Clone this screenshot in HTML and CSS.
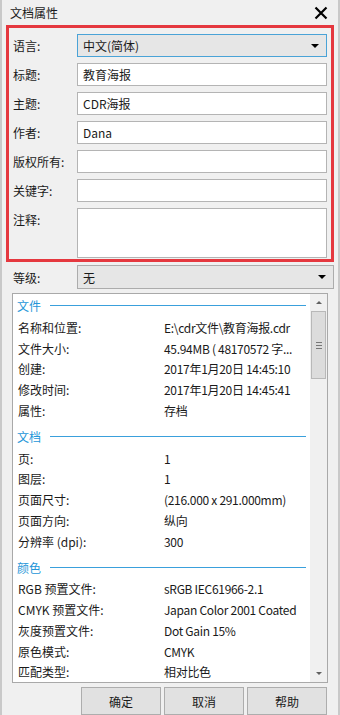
FILE: index.html
```html
<!DOCTYPE html>
<html lang="zh-CN">
<head>
    <meta charset="UTF-8">
    <meta name="viewport" content="width=device-width, initial-scale=1.0">
    <title>文档属性</title>
    <link rel="stylesheet" href="styles.css">
</head>
<body>
    <div class="dialog">
        <div class="title-bar">
            <span class="title">文档属性</span>
            <svg class="close" width="14" height="14" viewBox="0 0 14 14">
                <path d="M1.5 1.5L12.5 12.5M12.5 1.5L1.5 12.5" stroke="#000" stroke-width="2.2" fill="none"/>
            </svg>
        </div>

        <div class="props">
            <div class="field">
                <label>语言:</label>
                <div class="select focused"><span>中文(简体)</span><i class="arrow"></i></div>
            </div>
            <div class="field">
                <label>标题:</label>
                <div class="input">教育海报</div>
            </div>
            <div class="field">
                <label>主题:</label>
                <div class="input">CDR海报</div>
            </div>
            <div class="field">
                <label>作者:</label>
                <div class="input">Dana</div>
            </div>
            <div class="field">
                <label>版权所有:</label>
                <div class="input"></div>
            </div>
            <div class="field">
                <label>关键字:</label>
                <div class="input"></div>
            </div>
            <div class="field field-tall">
                <label>注释:</label>
                <div class="input textarea"></div>
            </div>
        </div>

        <div class="field level-row">
            <label>等级:</label>
            <div class="select"><span>无</span><i class="arrow"></i></div>
        </div>

        <div class="info">
            <div class="info-body">
                <div class="group-head"><span>文件</span><i></i></div>
                <div class="info-row"><span class="key">名称和位置:</span><span class="val">E:\cdr文件\教育海报.cdr</span></div>
                <div class="info-row"><span class="key">文件大小:</span><span class="val">45.94MB ( 48170572 字...</span></div>
                <div class="info-row"><span class="key">创建:</span><span class="val">2017年1月20日 14:45:10</span></div>
                <div class="info-row"><span class="key">修改时间:</span><span class="val">2017年1月20日 14:45:41</span></div>
                <div class="info-row"><span class="key">属性:</span><span class="val">存档</span></div>

                <div class="group-head"><span>文档</span><i></i></div>
                <div class="info-row"><span class="key">页:</span><span class="val">1</span></div>
                <div class="info-row"><span class="key">图层:</span><span class="val">1</span></div>
                <div class="info-row"><span class="key">页面尺寸:</span><span class="val">(216.000 x 291.000mm)</span></div>
                <div class="info-row"><span class="key">页面方向:</span><span class="val">纵向</span></div>
                <div class="info-row"><span class="key">分辨率 (dpi):</span><span class="val">300</span></div>

                <div class="group-head"><span>颜色</span><i></i></div>
                <div class="info-row"><span class="key">RGB 预置文件:</span><span class="val">sRGB IEC61966-2.1</span></div>
                <div class="info-row"><span class="key">CMYK 预置文件:</span><span class="val">Japan Color 2001 Coated</span></div>
                <div class="info-row"><span class="key">灰度预置文件:</span><span class="val">Dot Gain 15%</span></div>
                <div class="info-row"><span class="key">原色模式:</span><span class="val">CMYK</span></div>
                <div class="info-row"><span class="key">匹配类型:</span><span class="val">相对比色</span></div>
            </div>
            <div class="scrollbar">
                <i class="sb-up"></i>
                <div class="sb-track">
                    <div class="sb-thumb"><span class="grip"></span></div>
                </div>
                <i class="sb-down"></i>
            </div>
        </div>

        <div class="buttons">
            <button>确定</button>
            <button>取消</button>
            <button>帮助</button>
        </div>
    </div>
</body>
</html>
```

FILE: styles.css
```css
/* Dialog frame */
body {
    margin: 0;
    background: #f0f0f0;
    font-family: "Noto Sans CJK SC", "Noto Sans", sans-serif;
    font-size: 12px;
    color: #1a1a1a;
    overflow: hidden;
}

.dialog {
    width: 340px;
    height: 715px;
    box-sizing: border-box;
    border-left: 2px solid #c9c9c9;
    border-right: 2px solid #c9c9c9;
    background: #f0f0f0;
    display: flex;
    flex-direction: column;
}

.title-bar {
    height: 25px;
    display: flex;
    align-items: center;
    justify-content: space-between;
    padding: 0 10px 0 8px;
}

.title {
    font-size: 12px;
    line-height: 25px;
}

.close {
    display: block;
}

/* Property fields */
.props {
    margin: 0 4px 0 4px;
    border: 3px solid #e5383f;
    padding: 6px 4px 1px 4px;
    display: flex;
    flex-direction: column;
    gap: 6px;
}

.field {
    display: flex;
    align-items: center;
}

.field label {
    width: 64px;
    flex-shrink: 0;
    line-height: 23px;
}

.field-tall {
    align-items: flex-start;
}

.input,
.select {
    flex: 1;
    height: 23px;
    box-sizing: border-box;
    border: 1px solid #b4b4b4;
    background: #fff;
    padding: 0 5px;
    line-height: 21px;
    white-space: nowrap;
}

.textarea {
    height: 50px;
}

.select {
    display: flex;
    align-items: center;
    justify-content: space-between;
    background: #e6e6e6;
    border-color: #acacac;
    padding-right: 7px;
}

.select.focused {
    border-color: #4aa3d7;
}

.arrow {
    width: 0;
    height: 0;
    border-left: 4px solid transparent;
    border-right: 4px solid transparent;
    border-top: 4px solid #000;
}

.level-row {
    margin: 3px 4px 0 11px;
}

.level-row .select {
    height: 24px;
}

/* Info panel */
.info {
    margin: 4px 10px 0 10px;
    height: 394px;
    box-sizing: border-box;
    border: 1px solid #a9a9a9;
    background: #fff;
    display: flex;
}

.info-body {
    flex: 1;
    overflow: hidden;
}

.group-head {
    height: 23px;
    display: flex;
    align-items: center;
    padding-left: 4px;
    color: #2596d8;
    margin-top: 4px;
}

.group-head:first-child {
    margin-top: 0;
}

.group-head i {
    flex: 1;
    height: 1px;
    background: #3aa0dc;
    margin: 0 4px 0 9px;
}

.info-row {
    height: 20.75px;
    display: flex;
    align-items: center;
    white-space: nowrap;
}

.key {
    width: 151px;
    padding-left: 5px;
    box-sizing: border-box;
    flex-shrink: 0;
}

.val {
    letter-spacing: -0.3px;
}

/* Scrollbar */
.scrollbar {
    width: 17px;
    background: #f0f0f0;
    display: flex;
    flex-direction: column;
    align-items: center;
}

.sb-up,
.sb-down {
    width: 0;
    height: 0;
    border-left: 3px solid transparent;
    border-right: 3px solid transparent;
    margin: 7px 0;
}

.sb-up {
    border-bottom: 3px solid #606060;
}

.sb-down {
    border-top: 3px solid #606060;
}

.sb-track {
    flex: 1;
    width: 100%;
}

.sb-thumb {
    margin: 0 1px;
    height: 68px;
    box-sizing: border-box;
    border: 1px solid #b8b8b8;
    background: #dcdcdc;
    display: flex;
    align-items: center;
    justify-content: center;
}

.grip {
    width: 6px;
    height: 5px;
    border-top: 1px solid #777;
    border-bottom: 1px solid #777;
    position: relative;
}

.grip::after {
    content: "";
    position: absolute;
    left: 0;
    right: 0;
    top: 2px;
    height: 1px;
    background: #777;
}

/* Buttons */
.buttons {
    display: flex;
    justify-content: flex-end;
    gap: 3px;
    margin: 4px 11px 0 0;
}

.buttons button {
    width: 80px;
    height: 28px;
    font-family: inherit;
    font-size: 12px;
    color: #1a1a1a;
    background: #e1e1e1;
    border: 1px solid #adadad;
    padding: 0;
}
```
